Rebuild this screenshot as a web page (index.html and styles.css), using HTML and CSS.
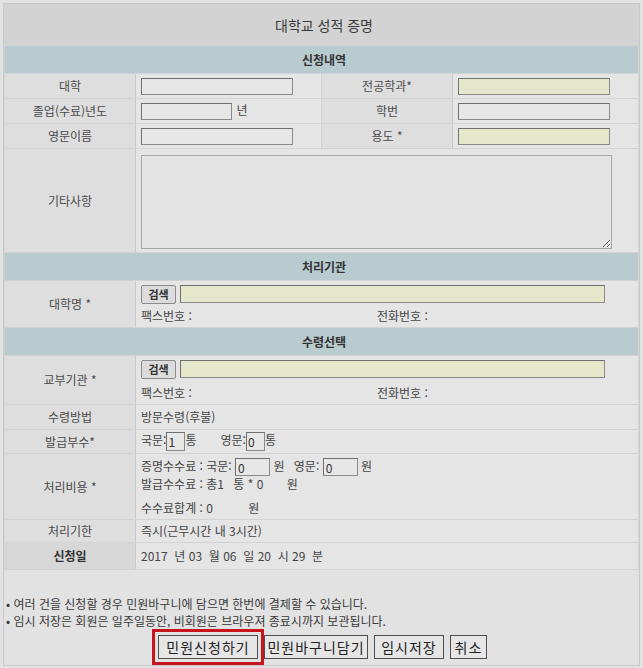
FILE: index.html
```html
<!DOCTYPE html>
<html lang="ko">
<head>
<meta charset="utf-8">
<link rel="stylesheet" href="styles.css">
</head>
<body>
<div class="page">
  <table class="form">
    <colgroup>
      <col class="c-label"><col class="c-val"><col class="c-label2"><col class="c-val2">
    </colgroup>
    <tr class="r-title"><td colspan="4" class="title">대학교 성적 증명</td></tr>
    <tr class="r-head"><td colspan="4" class="head">신청내역</td></tr>
    <tr class="r-25">
      <td class="lab">대학</td>
      <td class="val"><input class="inp w152" type="text"></td>
      <td class="lab">전공학과*</td>
      <td class="val"><input class="inp w152 req" type="text"></td>
    </tr>
    <tr class="r-25">
      <td class="lab">졸업(수료)년도</td>
      <td class="val"><input class="inp w91" type="text"> <span class="unit">년</span></td>
      <td class="lab">학번</td>
      <td class="val"><input class="inp w152" type="text"></td>
    </tr>
    <tr class="r-25">
      <td class="lab">영문이름</td>
      <td class="val"><input class="inp w152" type="text"></td>
      <td class="lab">용도 *</td>
      <td class="val"><input class="inp w152 req" type="text"></td>
    </tr>
    <tr class="r-memo">
      <td class="lab">기타사항</td>
      <td class="val" colspan="3"><textarea class="memo"></textarea></td>
    </tr>
    <tr class="r-head"><td colspan="4" class="head">처리기관</td></tr>
    <tr class="r-org">
      <td class="lab">대학명 *</td>
      <td class="val" colspan="3">
        <div class="search-line"><button class="btn-search" type="button">검색</button><input class="inp req wide" type="text"></div>
        <div class="contact"><span class="fax">팩스번호 :</span><span>전화번호 :</span></div>
      </td>
    </tr>
    <tr class="r-head"><td colspan="4" class="head">수령선택</td></tr>
    <tr class="r-org2">
      <td class="lab">교부기관 *</td>
      <td class="val" colspan="3">
        <div class="search-line"><button class="btn-search" type="button">검색</button><input class="inp req wide" type="text"></div>
        <div class="contact"><span class="fax">팩스번호 :</span><span>전화번호 :</span></div>
      </td>
    </tr>
    <tr class="r-25">
      <td class="lab">수령방법</td>
      <td class="val" colspan="3">방문수령(후불)</td>
    </tr>
    <tr class="r-24">
      <td class="lab">발급부수*</td>
      <td class="val" colspan="3">국문:<input class="inp num" type="text" value="1">통<span class="sp24"></span>영문:<input class="inp num" type="text" value="0">통</td>
    </tr>
    <tr class="r-fee">
      <td class="lab">처리비용 *</td>
      <td class="val" colspan="3">
        <div class="fee-line">증명수수료 : 국문: <input class="inp money" type="text" value="0"> 원 <span class="sp6"></span>영문: <input class="inp money" type="text" value="0"> 원</div>
        <div class="fee-line2">발급수수료 : 총1 <span class="sp6"></span>통 * 0 <span class="sp20"></span>원</div>
        <div class="fee-line3">수수료합계 : 0 <span class="sp32"></span>원</div>
      </td>
    </tr>
    <tr class="r-23">
      <td class="lab">처리기한</td>
      <td class="val" colspan="3">즉시(근무시간 내 3시간)</td>
    </tr>
    <tr class="r-date">
      <td class="lab strong">신청일</td>
      <td class="val" colspan="3">2017 &nbsp;년 03 &nbsp;월 06 &nbsp;일 20 &nbsp;시 29 &nbsp;분</td>
    </tr>
  </table>

  <div class="notes">
    <p>• 여러 건을 신청할 경우 민원바구니에 담으면 한번에 결제할 수 있습니다.</p>
    <p>• 임시 저장은 회원은 일주일동안, 비회원은 브라우져 종료시까지 보관됩니다.</p>
  </div>

  <div class="actions">
    <button class="act act1 marked" type="button">민원신청하기</button>
    <button class="act act2" type="button">민원바구니담기</button>
    <button class="act act3" type="button">임시저장</button>
    <button class="act act4" type="button">취소</button>
  </div>
</div>
</body>
</html>
```

FILE: styles.css
```css
html, body {
  margin: 0;
  padding: 0;
}
body {
  background: #e2e2e2;
  font-family: "Noto Sans CJK KR", "Noto Sans", sans-serif;
  font-size: 12px;
  color: #444;
}
.page {
  margin: 3px 3px 0 3px;
  height: 663px;
  box-sizing: border-box;
  border: 1px solid #c9c9c9;
}
.form {
  width: 100%;
  border-collapse: collapse;
  table-layout: fixed;
}
.c-label, .c-label2 { width: 131px; }
.c-val { width: 186px; }
.form td {
  border: 1px solid #d3d3d3;
  padding: 0 0 0 5px;
  vertical-align: middle;
  line-height: 16px;
}
.form td.lab {
  background: #dedede;
  text-align: center;
  padding: 0;
  border-right-color: #c8c8c8;
  color: #4a4a4a;
}
.form td.val {
  background: #e5e5e5;
}
.form td.title {
  background: #d3d3d3;
  text-align: center;
  font-size: 14px;
  color: #3a3a3a;
  height: 41px;
  border-top: 0;
}
.form td.head {
  background: #b8ccd0;
  text-align: center;
  font-weight: bold;
  color: #333;
  height: 27px;
  border-top: 1px solid #e6e6e6;
}
.r-25 td { height: 24px; }
.r-24 td { height: 23px; }
.r-23 td { height: 22px; }
.r-memo td { height: 103px; }
.r-org td { height: 46px; }
.r-org2 td { height: 48px; }
.r-fee td { height: 65px; }
.r-date td { height: 26px; }
.form td.strong {
  font-weight: bold;
  background: #d7d7d7;
  color: #333;
}

.inp {
  box-sizing: border-box;
  height: 17px;
  margin: 0;
  padding: 0 2px;
  border: 1px solid #8a8a8a;
  border-top-color: #6f6f6f;
  border-left-color: #6f6f6f;
  background: #e7e7e7;
  font-family: inherit;
  font-size: 12px;
  color: #333;
  vertical-align: middle;
}
.inp.req { background: #e5e7cb; }
.w152 { width: 152px; }
.w91 { width: 91px; }
.unit { margin-left: 1px; }
.memo {
  display: block;
  box-sizing: border-box;
  width: 471px;
  height: 94px;
  margin: 3px 0 1px;
  border: 1px solid #a5a5a5;
  background: #e4e4e4;
}

.search-line {
  display: flex;
  align-items: center;
  gap: 4px;
  height: 20px;
}
.btn-search {
  box-sizing: border-box;
  width: 35px;
  height: 19px;
  padding: 0;
  border: 1px solid #8c8c8c;
  border-radius: 2px;
  background: #dcdcdc;
  font-family: inherit;
  font-size: 11px;
  font-weight: bold;
  color: #333;
}
.wide { width: 425px; height: 18px; }
.contact {
  display: flex;
  margin-top: 4px;
}
.fax { width: 236px; }
.r-org2 .contact { margin-top: 6px; }

.num {
  width: 19px;
  height: 19px;
  padding: 0 1px;
}
.sp24 { display: inline-block; width: 24px; }
.sp6 { display: inline-block; width: 6px; }
.sp20 { display: inline-block; width: 20px; }
.sp32 { display: inline-block; width: 32px; }
.money {
  width: 35px;
  height: 18px;
}
.fee-line { margin-top: 1px; }
.fee-line2 { margin-top: 0; }
.fee-line3 { margin-top: 8px; }

.notes {
  margin-top: 25px;
  padding-left: 2px;
}
.notes p {
  margin: 0;
  line-height: 17px;
  color: #3a3a3a;
}

.actions {
  display: flex;
  justify-content: center;
  gap: 6px;
  margin-top: 6px;
  padding-left: 2px;
}
.act {
  box-sizing: border-box;
  height: 24px;
  padding: 0;
  border: 1px solid #4f4f4f;
  background: #e6e6e6;
  font-family: inherit;
  font-size: 14px;
  letter-spacing: 1px;
  color: #222;
}
.act1 { width: 100px; }
.act2 { width: 104px; }
.act3 { width: 70px; }
.act4 { width: 37px; }
.marked {
  outline: 3px solid #c8141c;
  outline-offset: 3px;
}
```
